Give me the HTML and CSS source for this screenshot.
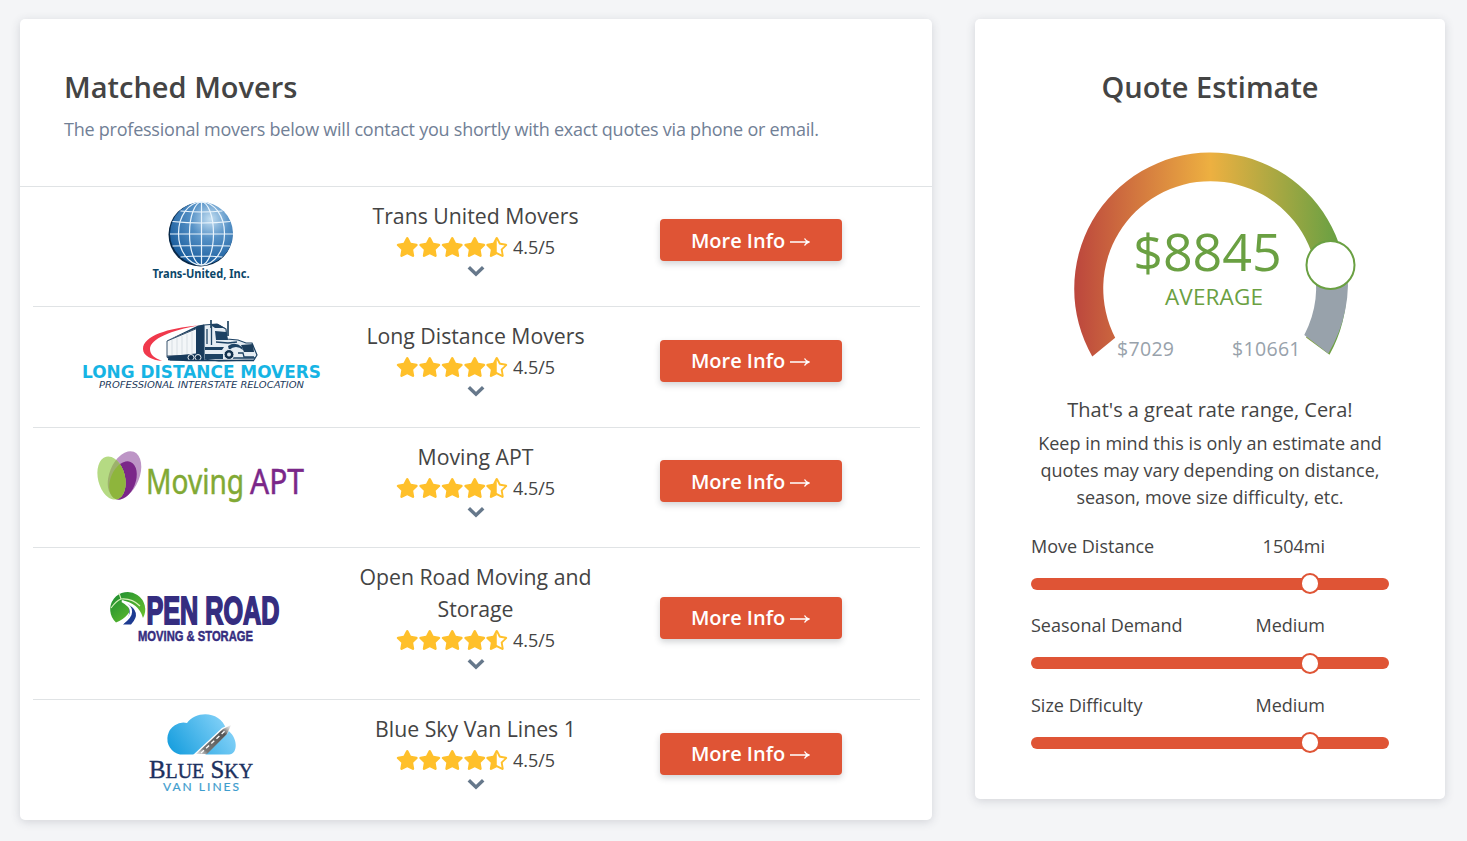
FILE: index.html
```html
<!DOCTYPE html>
<html lang="en">
<head>
<meta charset="utf-8">
<title>Matched Movers</title>
<link rel="stylesheet" href="styles.css">
</head>
<body>
<svg class="defs" width="0" height="0" aria-hidden="true">
  <symbol id="star" viewBox="0 0 576 512"><path d="M259.3 17.8L194 150.2 47.9 171.5c-26.200 3.800-36.700 36.100-17.700 54.600l105.700 103-25 145.500c-4.500 26.300 23.200 46 46.400 33.700L288 439.600l130.700 68.700c23.200 12.200 50.900-7.400 46.400-33.700l-25-145.500 105.700-103c19-18.500 8.500-50.800-17.700-54.600L382 150.200 316.700 17.800c-11.700-23.600-45.600-23.900-57.400 0z"/></symbol>
  <symbol id="half" viewBox="0 0 576 512"><path fill-rule="evenodd" d="M259.3 17.800L194 150.200 47.900 171.500c-26.200 3.800-36.700 36.100-17.700 54.600l105.700 103-25 145.500c-4.500 26.300 23.200 46 46.400 33.700L288 439.600l130.700 68.700c23.200 12.200 50.900-7.400 46.400-33.700l-25-145.500 105.700-103c19-18.500 8.500-50.800-17.700-54.600L382 150.200 316.700 17.800c-11.700-23.600-45.600-23.900-57.400 0zM406.800 294.700l-18.100 17.600 4.300 24.900 19.500 113.500-102.100-53.600-22.400-11.800V68.200l51 103.300 11.200 22.600 25 3.700 114.200 16.600z"/></symbol>
  <symbol id="rating" viewBox="0 0 112 20">
    <use href="#star" x="0" y="0" width="22.500" height="20"/><use href="#star" x="22.500" y="0" width="22.500" height="20"/><use href="#star" x="45" y="0" width="22.500" height="20"/><use href="#star" x="67.500" y="0" width="22.500" height="20"/><use href="#half" x="89.500" y="0" width="22.500" height="20"/>
  </symbol>
</svg>
<main class="page">
  <section class="card movers">
    <header class="movers-head">
      <h2>Matched Movers</h2>
      <p>The professional movers below will contact you shortly with exact quotes via phone or email.</p>
    </header>
    <div class="list">
      <article class="row">
        <svg class="logo" width="120" height="80" viewBox="140.500 200 120 80">
          <defs><radialGradient id="globe" cx=".64" cy=".27" r=".78"><stop offset="0" stop-color="#c4dff2"/><stop offset=".4" stop-color="#5591c6"/><stop offset="1" stop-color="#145899"/></radialGradient></defs>
          <circle cx="200" cy="234.500" r="32" fill="#082848"/>
          <circle cx="201" cy="233.500" r="31.500" fill="url(#globe)"/>
          <g fill="none" stroke="#e9f4fc" stroke-width="1.200">
            <path d="M201 202v63M180 211q21 2 42 0M172 221.500q29 3 58 0M169.500 234h63M172 246q29-1 58 0M180 257q21-2 42 0"/>
            <ellipse cx="201" cy="233.500" rx="12" ry="31.500"/><ellipse cx="201" cy="233.500" rx="23" ry="31.500"/>
          </g>
          <text x="152" y="277.500" class="t-trans" textLength="97" lengthAdjust="spacingAndGlyphs">Trans-United, Inc.</text>
        </svg>
        <div class="info"><h3>Trans United Movers</h3><div class="score"><svg class="stars"><use href="#rating"/></svg><span>4.5/5</span></div><svg class="chev" viewBox="0 0 18 12"><path d="M1.800 2.300L9 9.200l7.200-6.900"/></svg></div>
        <a class="btn"><span>More Info</span><svg width="20" height="12" viewBox="0 0 20 12"><path d="M0 6h18.500M14.500 2.500q1.500 2.500 4.300 3.500q-2.800 1-4.300 3.500"/></svg></a>
      </article>
      <article class="row">
        <svg class="logo" width="250" height="80" viewBox="76 321 250 80">
          <path d="M198 325.500C168 328 143 336 143 349c0 7 9 11 19 12-7-3-12-6-12-12 0-10 22-19 48-23.500z" fill="#f0394c"/>
          <path d="M167 341l31-13v27l-31 1z" fill="#f3f6f8" stroke="#25415e" stroke-width=".9"/>
          <path d="M172 340v15M177 338v17M182 336v19M187 334v21M192 332v23" stroke="#cbd4db" stroke-width=".7"/>
          <path d="M166 341l32-15.500 6-1v36h-34l-4-4 30-3v-25z" fill="#183b5c"/>
          <path d="M204 325l13-1 9 5 1 10 11 1 8 3 6 0 5 12-3 5-35 1-15-2z" fill="#e6edf3" stroke="#1d4263" stroke-width="1.200"/>
          <path d="M215 331l11 1 2 8-12 0zM209 324h9l7 4h-10zM205 347h19l-2 3h-17zM205 354h18v5h-18zM228 346q7-5 14 1l1 3q-7-6-14 0z" fill="#1d4263"/>
          <path d="M207 329v15M211.500 326v19M216 342l12 1 9-1M233 358h22" fill="none" stroke="#1d4263" stroke-width="1.300"/>
          <path d="M241 345l12-1 1 8h-10z" fill="#1d3e5c"/>
          <path d="M238 353l5 0 1 4h10" fill="none" stroke="#1d4263" stroke-width="1.300"/>
          <path d="M211 320v8M228 321v15" stroke="#234763" stroke-width="1.700"/>
          <g fill="#13314d" stroke="#eef3f7" stroke-width="1"><circle cx="191" cy="357.500" r="3"/><circle cx="198" cy="357.500" r="3"/><circle cx="229" cy="354.500" r="5"/></g>
          <circle cx="229" cy="354.500" r="2" fill="#dce5ec"/>
          <path d="M168 359.500l20 1h66" fill="none" stroke="#183b5c" stroke-width="1.500"/>
          <text x="82" y="378" class="t-long" textLength="239" lengthAdjust="spacingAndGlyphs">LONG DISTANCE MOVERS</text>
          <text x="99" y="388" class="t-prof" textLength="205" lengthAdjust="spacingAndGlyphs">PROFESSIONAL INTERSTATE RELOCATION</text>
        </svg>
        <div class="info"><h3>Long Distance Movers</h3><div class="score"><svg class="stars"><use href="#rating"/></svg><span>4.5/5</span></div><svg class="chev" viewBox="0 0 18 12"><path d="M1.800 2.300L9 9.200l7.200-6.900"/></svg></div>
        <a class="btn"><span>More Info</span><svg width="20" height="12" viewBox="0 0 20 12"><path d="M0 6h18.500M14.500 2.500q1.500 2.500 4.300 3.500q-2.800 1-4.300 3.500"/></svg></a>
      </article>
      <article class="row">
        <svg class="logo" width="220" height="60" viewBox="91 452 220 60">
          <defs><clipPath id="petal"><ellipse cx="111.500" cy="479" rx="13.500" ry="22" transform="rotate(-14 111.500 479)"/></clipPath></defs>
          <ellipse cx="124.500" cy="476" rx="15" ry="25" transform="rotate(22 124.500 476)" fill="#bd95c6"/>
          <ellipse cx="123" cy="481.500" rx="12.500" ry="20" transform="rotate(22 123 481.500)" fill="#7b2789"/>
          <g clip-path="url(#petal)">
            <path d="M90 450h50v55H90z" fill="#b5da83"/>
            <ellipse cx="124.500" cy="476" rx="15" ry="25" transform="rotate(22 124.500 476)" fill="#9db16c"/>
            <ellipse cx="123" cy="481.500" rx="12.500" ry="20" transform="rotate(22 123 481.500)" fill="#8eb53c"/>
          </g>
          <text x="146" y="495" class="t-moving" textLength="98" lengthAdjust="spacingAndGlyphs">Moving</text>
          <text x="250" y="495" class="t-apt" textLength="54" lengthAdjust="spacingAndGlyphs">APT</text>
        </svg>
        <div class="info"><h3>Moving APT</h3><div class="score"><svg class="stars"><use href="#rating"/></svg><span>4.5/5</span></div><svg class="chev" viewBox="0 0 18 12"><path d="M1.800 2.300L9 9.200l7.200-6.900"/></svg></div>
        <a class="btn"><span>More Info</span><svg width="20" height="12" viewBox="0 0 20 12"><path d="M0 6h18.500M14.500 2.500q1.500 2.500 4.300 3.500q-2.800 1-4.300 3.500"/></svg></a>
      </article>
      <article class="row">
        <svg class="logo" width="190" height="64" viewBox="106 586 190 64">
          <defs><linearGradient id="leaf" x2="1" y2="1"><stop stop-color="#178a32"/><stop offset="1" stop-color="#72c62b"/></linearGradient></defs>
          <path d="M116 622.500A17.500 17.500 0 1 1 143 618Q139 603 121 600Q134 607 128 614Q123 620 116 622.500Z" fill="url(#leaf)"/>
          <path d="M111 608q5-7 10-9l-2-6M121 599q11-1 19 7" fill="none" stroke="#d8f1bb" stroke-width="1.100"/>
          <path d="M126 603Q143 612 131 624.500H123Q134 613 126 603Z" fill="#1e3b91"/>
          <path d="M122 601Q140 611 122 623.500" fill="none" stroke="#fff" stroke-width="2.200"/>
          <text x="146.500" y="624" class="t-open" textLength="133" lengthAdjust="spacingAndGlyphs">PEN ROAD</text>
          <text x="138" y="640.500" class="t-storage" textLength="115" lengthAdjust="spacingAndGlyphs">MOVING &amp; STORAGE</text>
        </svg>
        <div class="info"><h3>Open Road Moving and Storage</h3><div class="score"><svg class="stars"><use href="#rating"/></svg><span>4.5/5</span></div><svg class="chev" viewBox="0 0 18 12"><path d="M1.800 2.300L9 9.200l7.200-6.900"/></svg></div>
        <a class="btn"><span>More Info</span><svg width="20" height="12" viewBox="0 0 20 12"><path d="M0 6h18.500M14.500 2.500q1.500 2.500 4.300 3.500q-2.800 1-4.300 3.500"/></svg></a>
      </article>
      <article class="row">
        <svg class="logo" width="120" height="80" viewBox="141 714 120 80">
          <defs><linearGradient id="sky" y1=".7" x2="1" y2=".3"><stop stop-color="#1ba0df"/><stop offset="1" stop-color="#8bd5fa"/></linearGradient>
          <linearGradient id="road" x1="0" y1="1" x2="1" y2="0"><stop stop-color="#999" stop-opacity=".2"/><stop offset=".2" stop-color="#777"/><stop offset=".75" stop-color="#555"/><stop offset="1" stop-color="#999" stop-opacity=".1"/></linearGradient></defs>
          <path d="M180 754.500a15.500 15.500 0 1 1 7-31.500c9-13 34-12 39 6 13 8 12 25.500 3 25.500z" fill="url(#sky)"/>
          <path d="M193 755l29-27 9-4-3 9-23 22z" fill="#fff"/>
          <path d="M196 754l27-25 8-4-4 9-20 20z" fill="url(#road)"/>
          <path d="M201 753l25-23" stroke="#fff" stroke-width="1.300" stroke-dasharray="4 3"/>
          <text x="149" y="777.500" class="t-blue" textLength="104" lengthAdjust="spacingAndGlyphs">B<tspan class="small-cap">LUE</tspan> S<tspan class="small-cap">KY</tspan></text>
          <text x="163" y="791" class="t-van" textLength="76">VAN LINES</text>
        </svg>
        <div class="info"><h3>Blue Sky Van Lines 1</h3><div class="score"><svg class="stars"><use href="#rating"/></svg><span>4.5/5</span></div><svg class="chev" viewBox="0 0 18 12"><path d="M1.800 2.300L9 9.200l7.200-6.900"/></svg></div>
        <a class="btn"><span>More Info</span><svg width="20" height="12" viewBox="0 0 20 12"><path d="M0 6h18.500M14.500 2.500q1.500 2.500 4.300 3.500q-2.800 1-4.300 3.500"/></svg></a>
      </article>
    </div>
  </section>
  <section class="card quote">
    <h2>Quote Estimate</h2>
    <svg class="gauge" width="300" height="224" viewBox="1060 145 300 224">
      <defs><linearGradient id="heat" gradientUnits="userSpaceOnUse" x1="1074" x2="1347" y1="0" y2="0"><stop stop-color="#bc463d"/><stop offset=".5" stop-color="#edb041"/><stop offset="1" stop-color="#5f9f43"/></linearGradient></defs>
      <path d="M1092.300 356.500A136.200 136.200 0 1 1 1329.500 354.800L1306 337.500A107.300 107.300 0 1 0 1115.200 337.700Z" fill="url(#heat)"/>
      <path d="M1346.300 262A136 136 0 0 1 1328.300 353.500L1304.300 335A105 105 0 0 0 1313 262Z" fill="#98a2ab"/>
      <circle cx="1330.500" cy="265" r="24" fill="#fff" stroke="#6aa042" stroke-width="2"/>
      <text x="1207.500" y="271" class="g-value" text-anchor="middle">$8845</text>
      <text x="1165" y="304.500" class="g-label" textLength="98">AVERAGE</text>
      <text x="1117" y="356" class="g-end" textLength="57">$7029</text>
      <text x="1232" y="356" class="g-end" textLength="68.500">$10661</text>
    </svg>
    <p class="great">That's a great rate range, Cera!</p>
    <p class="note">Keep in mind this is only an estimate and quotes may vary depending on distance, season, move size difficulty, etc.</p>
    <div class="factor"><div class="labels"><span>Move Distance</span><span>1504mi</span></div><div class="track"><i class="knob"></i></div></div>
    <div class="factor"><div class="labels"><span>Seasonal Demand</span><span>Medium</span></div><div class="track"><i class="knob"></i></div></div>
    <div class="factor"><div class="labels"><span>Size Difficulty</span><span>Medium</span></div><div class="track"><i class="knob"></i></div></div>
  </section>
</main>
</body>
</html>
```
FILE: styles.css
```css
* { box-sizing: border-box; }
body { margin: 0; background: #f4f5f7; color: #444; font-family: "Open Sans", sans-serif; }
h2, h3, p { margin: 0; }
svg { display: block; }
.defs { position: absolute; }
.page { display: flex; align-items: flex-start; gap: 43px; padding: 19px 0 0 20px; height: 841px; overflow: hidden; }
.card { background: #fff; border-radius: 5px; box-shadow: 0 2px 10px rgba(50, 55, 70, .17); }
.card h2 { font-size: 29px; font-weight: 600; line-height: 38px; }
.movers { width: 912px; height: 801px; }
.movers-head { height: 168px; padding: 49px 44px 0; border-bottom: 1px solid #e0e3e5; }
.movers-head p { margin-top: 10px; font-size: 18px; line-height: 27px; letter-spacing: -.23px; color: #718096; white-space: nowrap; }
.list { padding: 0 12px 0 13px; }
.row { display: grid; grid-template-columns: repeat(3, 275px); align-items: center; justify-items: center; padding: 13px 30px 26px; border-bottom: 1px solid #e0e3e5; height: 120.400px; }
.row:first-child { padding-top: 12.800px; }
.row:nth-child(4) { height: 152px; }
.row:last-child { border-bottom: 0; }
.logo { overflow: visible; }
.info { display: flex; flex-direction: column; align-items: center; width: 247px; }
.info h3 { font-size: 21.250px; font-weight: 400; line-height: 32px; text-align: center; }
.score { display: flex; align-items: center; gap: 4.500px; height: 30px; padding-left: .6px; font-size: 18px; }
.stars { width: 112px; height: 20px; fill: #ffc02a; }
.chev { width: 18px; height: 12px; margin: 3px 0 4px; fill: none; stroke: #66788b; stroke-width: 3.500; }
.row:first-child .chev { margin-bottom: 3px; }
.btn { display: flex; align-items: center; justify-content: center; gap: 5px; width: 182px; height: 42px; border-radius: 4px; background: #df5435; color: #fff; font-size: 20px; font-weight: 600; box-shadow: 0 3px 6px rgba(50, 60, 70, .22); }
.btn svg { fill: none; stroke: #fff; stroke-width: 1.400; margin-top: 3px; }

.t-trans { font: bold 12px "Noto Sans", sans-serif; fill: #0b4669; }
.t-long { font: bold 17px "DejaVu Sans", sans-serif; fill: #16b4e4; }
.t-prof { font: italic 8px "DejaVu Sans", sans-serif; fill: #1c3a5c; }
.t-moving { font: 35px "Noto Sans", sans-serif; fill: #81a934; stroke: #81a934; stroke-width: .5px; }
.t-apt { font: 35px "Noto Sans", sans-serif; fill: #7b2789; stroke: #7b2789; stroke-width: .5px; }
.t-open { font: bold 38px "Liberation Sans", sans-serif; fill: #352d80; stroke: #352d80; stroke-width: 1.900px; }
.t-storage { font: bold 15.500px "Liberation Sans", sans-serif; fill: #352d80; stroke: #352d80; stroke-width: .5px; }
.t-blue { font: 25px "Liberation Serif", serif; fill: #1d315f; stroke: #1d315f; stroke-width: .4px; }
.small-cap { font-size: 20px; }
.t-van { font: 12px Lato, sans-serif; fill: #3e9dce; stroke: #3e9dce; stroke-width: .2px; }

.quote { width: 470px; height: 780px; padding: 49px 56px 0; }
.quote h2 { text-align: center; }
.gauge { margin: 39px 0 0 29px; }
.g-value { font-size: 52px; fill: #6aa042; }
.g-label { font-size: 22.500px; fill: #6aa042; }
.g-end { font-size: 19.500px; fill: #98a2ab; }
.great { margin-top: 26px; font-size: 20px; line-height: 30px; letter-spacing: -.02px; text-align: center; }
.note { margin: 5px -10px 0; font-size: 18px; line-height: 27px; text-align: center; }
.factor { height: 79.600px; }
.note + .factor { margin-top: 21.800px; }
.labels { display: flex; justify-content: space-between; padding-right: 64px; font-size: 18px; line-height: 27px; }
.track { position: relative; height: 12px; margin-top: 18px; border-radius: 6px; background: #df5435; }
.knob { position: absolute; left: 268.500px; top: -4.500px; width: 20.500px; height: 21px; border: 2px solid #df5435; border-radius: 50%; background: #fff; }
```
